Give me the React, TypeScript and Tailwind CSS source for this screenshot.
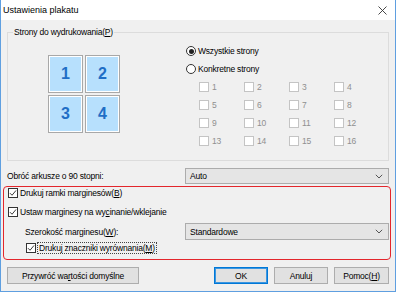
import React from 'react';

const font = { fontFamily: '"Liberation Sans", Arial, sans-serif' };

const Check = ({ checked = false, disabled = false }: { checked?: boolean; disabled?: boolean }) => (
  <span
    className={
      disabled
        ? 'flex h-[10px] w-[10px] shrink-0 items-center justify-center border border-[#c4c4c4] bg-white'
        : 'flex h-[10px] w-[10px] shrink-0 items-center justify-center border border-[#333333] bg-white'
    }
  >
    {checked && (
      <svg viewBox="0 0 10 10" className="h-[8px] w-[8px]">
        <path d="M1.2 5.2 L3.8 7.8 L8.8 1.8" stroke="#222" strokeWidth="1.1" fill="none" />
      </svg>
    )}
  </span>
);

const Radio = ({ selected = false }: { selected?: boolean }) => (
  <span className="flex h-[10px] w-[10px] shrink-0 items-center justify-center rounded-full border border-[#333333] bg-white">
    {selected && <span className="h-[5px] w-[5px] rounded-full bg-[#222]" />}
  </span>
);

const Chevron = () => (
  <svg viewBox="0 0 8 5" className="h-[5px] w-[8px]">
    <path d="M0.8 0.8 L4 4 L7.2 0.8" stroke="#555" strokeWidth="1" fill="none" />
  </svg>
);

const Select = ({ value, h }: { value: string; h: string }) => (
  <div
    className={`flex w-[204px] items-center justify-between border border-[#acacac] bg-[#e5e5e5] pl-[4px] pr-[5px] ${h}`}
  >
    <span>{value}</span>
    <Chevron />
  </div>
);

const Tile = ({ n }: { n: number }) => (
  <div className="flex h-[38px] w-[35px] items-center justify-center border border-[#a8a8a8] bg-[#b7e0fd] shadow-[inset_0_0_0_1px_#ffffff]">
    <span className="text-[16px] font-bold tracking-normal text-[#1f6ec6]">{n}</span>
  </div>
);

const Button = ({ children, w, primary = false }: { children: React.ReactNode; w: string; primary?: boolean }) => (
  <div
    className={`flex h-[17px] items-center justify-center bg-[#e1e1e1] ${w} ${
      primary ? 'border border-[#0078d7] shadow-[inset_0_0_0_1px_#3c96e0]' : 'border border-[#adadad]'
    }`}
  >
    {children}
  </div>
);

const pages = Array.from({ length: 16 }, (_, i) => i + 1);

export default function App() {
  return (
    <div
      className="flex h-[292px] w-[396px] flex-col border-x border-b border-[#5f9fe0] text-[8.5px] leading-[12px] tracking-[-0.2px] text-[#000]"
      style={font}
    >
      <div className="flex h-[20px] items-center justify-between bg-white pl-[2px] pr-[8px]">
        <span className="text-[9px] tracking-normal">Ustawienia plakatu</span>
        <svg viewBox="0 0 9 9" className="h-[9px] w-[9px]">
          <path d="M0.5 0.5 L8.5 8.5 M8.5 0.5 L0.5 8.5" stroke="#333" strokeWidth="0.9" />
        </svg>
      </div>

      <div className="flex flex-1 flex-col bg-[#f0f0f0]">
        <fieldset className="mx-[6px] mt-[6px] border border-[#dcdcdc] pl-[5px] pb-[10px]">
          <legend className="px-[1px] leading-[12px]">
            Strony do wydrukowania(<span className="underline">P</span>)
          </legend>
          <div className="flex">
            <div className="w-[173px] pl-[35px] pt-[17px]">
              <div className="grid w-[72px] grid-cols-2 gap-[2px]">
                <Tile n={1} />
                <Tile n={2} />
                <Tile n={3} />
                <Tile n={4} />
              </div>
            </div>
            <div className="flex flex-col pt-[4px]">
              <div className="flex h-[18px] items-center gap-[2px]">
                <Radio selected />
                <span>Wszystkie strony</span>
              </div>
              <div className="flex h-[18px] items-center gap-[2px]">
                <Radio />
                <span>Konkretne strony</span>
              </div>
              <div className="grid grid-cols-[45px_45px_45px_45px] pl-[13px]">
                {pages.map((p) => (
                  <div key={p} className="flex h-[18px] items-center gap-[3px] text-[#8f8f8f]">
                    <Check disabled />
                    <span>{p}</span>
                  </div>
                ))}
              </div>
            </div>
          </div>
        </fieldset>

        <div className="mt-[7px] flex items-center justify-between px-[6px]">
          <span>Obróć arkusze o 90 stopni:</span>
          <Select value="Auto" h="h-[16px]" />
        </div>

        <div className="ml-[2px] mr-[4px] mt-[2px] flex flex-col rounded-[4px] border border-[#e3262c] pl-[4px] pr-[1px] pb-[5px]">
          <div className="flex h-[12px] items-center gap-[2px]">
            <Check checked />
            <span>
              Drukuj ramki marginesów(<span className="underline">B</span>)
            </span>
          </div>
          <div className="mt-[7px] flex h-[12px] items-center gap-[2px]">
            <Check checked />
            <span>
              Ustaw marginesy na wy<span className="underline">c</span>inanie/wklejanie
            </span>
          </div>
          <div className="mt-[5px] flex items-center justify-between">
            <span className="ml-[17px]">
              Szerokość marginesu(<span className="underline">W</span>):
            </span>
            <Select value="Standardowe" h="h-[17px]" />
          </div>
          <div className="ml-[18px] mt-[2px] flex h-[12px] items-center gap-[1px]">
            <Check checked />
            <span className="border border-dotted border-[#444] px-[1px] leading-[10px]">
              Drukuj znaczniki wyrównania(<span className="underline">M</span>)
            </span>
          </div>
        </div>

        <div className="mt-[7px] flex items-center px-[6px]">
          <Button w="w-[132px]">
            <span>
              Przywróć wa<span className="underline">r</span>tości domyślne
            </span>
          </Button>
          <div className="ml-auto flex gap-[6px]">
            <Button w="w-[54px]" primary>
              OK
            </Button>
            <Button w="w-[54px]">Anuluj</Button>
            <Button w="w-[55px]">
              <span>
                Pomoc(<span className="underline">H</span>)
              </span>
            </Button>
          </div>
        </div>
      </div>
    </div>
  );
}
